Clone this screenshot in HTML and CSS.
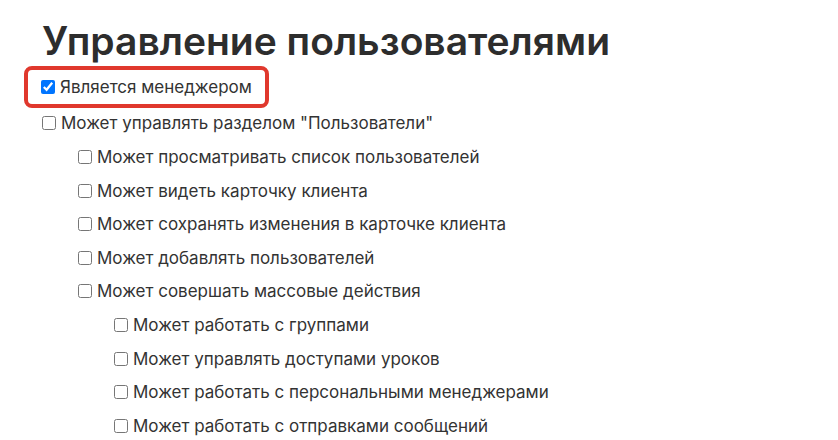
FILE: index.html
```html
<!DOCTYPE html>
<html lang="ru">
<head>
  <meta charset="UTF-8" />
  <title>Управление пользователями</title>
  <link rel="stylesheet" href="styles.css">
</head>
<body>
  <div class="page">
    <h1>Управление пользователями</h1>

    <!-- manager flag -->
    <div class="highlight">
      <label class="row"><input type="checkbox" checked> Является менеджером</label>
    </div>

    <ul class="perms">
      <li>
        <label class="row"><input type="checkbox"> Может управлять разделом "Пользователи"</label>
        <ul>
          <li><label class="row"><input type="checkbox"> Может просматривать список пользователей</label></li>
          <li><label class="row"><input type="checkbox"> Может видеть карточку клиента</label></li>
          <li><label class="row"><input type="checkbox"> Может сохранять изменения в карточке клиента</label></li>
          <li><label class="row"><input type="checkbox"> Может добавлять пользователей</label></li>
          <li>
            <label class="row"><input type="checkbox"> Может совершать массовые действия</label>
            <ul>
              <li><label class="row"><input type="checkbox"> Может работать с группами</label></li>
              <li><label class="row"><input type="checkbox"> Может управлять доступами уроков</label></li>
              <li><label class="row"><input type="checkbox"> Может работать с персональными менеджерами</label></li>
              <li><label class="row"><input type="checkbox"> Может работать с отправками сообщений</label></li>
            </ul>
          </li>
        </ul>
      </li>
    </ul>
  </div>
</body>
</html>
```

FILE: styles.css
```css
body        {margin:0; background:#fff; color:#333; font-family:Inter, "Noto Sans", sans-serif;}
.page       {padding:0 0 0 24px;}
h1          {margin:0; padding:20px 0 5px 18px; font-size:39px; font-weight:600; line-height:41px; color:#2d2d2d;}

.highlight  {display:inline-block; border:4px solid #e0382d; border-radius:8px; padding:0 13px 0 13px;}
.row        {display:flex; align-items:center; gap:5px; height:33.6px; font-size:17px; white-space:nowrap;}
.row input  {width:14px; height:14px; margin:0;}

.perms      {list-style:none; margin:-1px 0 0; padding:0 0 0 18px;}
.perms ul   {list-style:none; margin:0; padding:0 0 0 36px;}
```
